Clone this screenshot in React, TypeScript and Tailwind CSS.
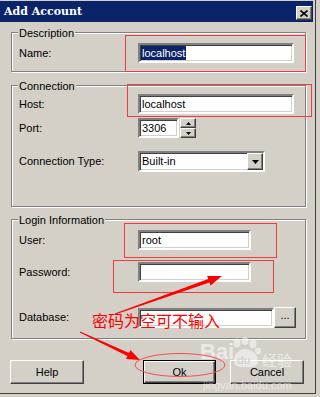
import React from 'react';

// Win2k style chrome pieces
const Sunken: React.FC<{ className?: string; children?: React.ReactNode }> = ({ className, children }) => (
  <div
    className={`h-[20px] bg-white border-2 border-t-[#808080] border-l-[#808080] border-b-white border-r-white shadow-[inset_1px_1px_0_#404040,inset_-1px_-1px_0_#d4d0c8] flex items-center pl-[1px] ${className ?? ''}`}
  >
    {children}
  </div>
);

const Raised: React.FC<{ className?: string; children?: React.ReactNode }> = ({ className, children }) => (
  <div
    className={`bg-[#d4d0c8] border border-t-white border-l-white border-b-[#404040] border-r-[#404040] shadow-[inset_-1px_-1px_0_#808080] flex items-center justify-center ${className ?? ''}`}
  >
    {children}
  </div>
);

const Group: React.FC<{ title: string; className?: string; children?: React.ReactNode }> = ({ title, className, children }) => (
  <div
    className={`relative w-[295px] border border-[#808080] shadow-[inset_1px_1px_0_#fff,1px_1px_0_#fff] pl-[7px] ${className ?? ''}`}
  >
    <span className="absolute left-[6px] -top-[6px] px-[1px] bg-[#d4d0c8] leading-[13px]">{title}</span>
    {children}
  </div>
);

const Row: React.FC<{ label: string; className?: string; children?: React.ReactNode }> = ({ label, className, children }) => (
  <div className={`flex items-center ${className ?? ''}`}>
    <span className="w-[119px] shrink-0">{label}</span>
    {children}
  </div>
);

const Tri: React.FC<{ down?: boolean; w: number; h: number }> = ({ down, w, h }) => (
  <svg width={w} height={h} viewBox={`0 0 ${w} ${h}`}>
    <polygon points={down ? `0,0 ${w},0 ${w / 2},${h}` : `0,${h} ${w},${h} ${w / 2},0`} fill="#000" />
  </svg>
);

export default function App() {
  return (
    <div className="relative w-[320px] h-[397px] overflow-hidden bg-[#d4d0c8] text-[11px] text-black font-['Liberation_Sans',Arial,sans-serif]">
      <div className="w-[316px] h-[394px] border-r border-b border-[#404040] pt-[1px]">
        {/* Title bar */}
        <div className="mr-[2px] h-[21px] bg-[#0a246a] flex items-center justify-between pl-[4px] pr-[1px]">
          <span className="text-white font-bold text-[11px] leading-none font-['DejaVu_Serif','Liberation_Serif',serif]">
            Add Account
          </span>
          <Raised className="w-[16px] h-[14px] mt-[3px]">
            <svg width="8" height="7" viewBox="0 0 8 7">
              <path d="M0.5 0.5 L7.5 6.5 M7.5 0.5 L0.5 6.5" stroke="#000" strokeWidth="1.6" />
            </svg>
          </Raised>
        </div>

        <div className="px-[11px]">
          <Group title="Description" className="mt-[10px] pt-[10px] pb-[8px]">
            <Row label="Name:">
              <Sunken className="w-[156px]">
                <span className="bg-[#0a246a] text-white leading-[14px] px-[1px]">localhost</span>
              </Sunken>
            </Row>
          </Group>

          <Group title="Connection" className="mt-[13px] pt-[8px] pb-[34px]">
            <Row label="Host:">
              <Sunken className="w-[156px] pl-[2px]">localhost</Sunken>
            </Row>
            <Row label="Port:" className="mt-[4px]">
              <Sunken className="w-[41px] pl-[2px]">3306</Sunken>
              <div className="flex flex-col ml-[1px]">
                <Raised className="w-[16px] h-[10px]">
                  <Tri w={5} h={3} />
                </Raised>
                <Raised className="w-[16px] h-[10px]">
                  <Tri down w={5} h={3} />
                </Raised>
              </div>
            </Row>
            <Row label="Connection Type:" className="mt-[13px]">
              <Sunken className="w-[127px] h-[21px] pl-[2px] pr-0 justify-between">
                <span>Built-in</span>
                <Raised className="w-[16px] h-[17px]">
                  <Tri down w={7} h={4} />
                </Raised>
              </Sunken>
            </Row>
          </Group>

          <Group title="Login Information" className="mt-[12px] pt-[10px] pb-[10px]">
            <Row label="User:">
              <Sunken className="w-[113px] pl-[2px]">root</Sunken>
            </Row>
            <Row label="Password:" className="mt-[12px]">
              <Sunken className="w-[113px]" />
            </Row>
            <Row label="Database:" className="mt-[25px]">
              <Sunken className="w-[136px]" />
              <Raised className="w-[22px] h-[21px] pb-[4px]">...</Raised>
            </Row>
          </Group>

          <div className="flex mt-[21px] -ml-[1px]">
            <Raised className="w-[75px] h-[24px]">Help</Raised>
            <div className="ml-[59px] w-[74px] h-[24px] border border-black">
              <Raised className="w-full h-full">Ok</Raised>
            </div>
            <Raised className="ml-[14px] w-[75px] h-[24px]">Cancel</Raised>
          </div>
        </div>
      </div>

      {/* Baidu watermark */}
      <div className="absolute left-[200px] top-[341px] text-white/55 font-bold text-[22px] leading-none pointer-events-none">
        Bai
      </div>
      <svg className="absolute left-[228px] top-[337px] pointer-events-none" width="36" height="32" viewBox="0 0 36 32">
        <g fill="rgba(255,255,255,0.5)">
          <ellipse cx="9" cy="6" rx="3.5" ry="4.5" />
          <ellipse cx="17" cy="4" rx="3.5" ry="4" />
          <ellipse cx="25" cy="7" rx="3.5" ry="4.5" />
          <ellipse cx="30" cy="14" rx="3" ry="3.5" />
          <path d="M6 24 C6 16 12 12 17 12 C24 12 30 18 30 24 C30 30 24 31 17 30 C11 31 6 29 6 24 Z" />
        </g>
        <text x="9" y="27" fontSize="11" fontWeight="bold" fill="rgba(212,208,200,0.9)" fontFamily="Liberation Sans, Arial, sans-serif">du</text>
      </svg>
      <div className="absolute left-[262px] top-[352px] text-white/55 text-[15px] leading-none font-['Noto_Sans_CJK_SC',sans-serif] pointer-events-none">
        经验
      </div>
      <div className="absolute left-[203px] top-[380px] text-white/50 text-[11px] leading-none pointer-events-none">
        jingyan.baidu.com
      </div>

      {/* Red annotations */}
      <svg className="absolute inset-0 pointer-events-none" width="320" height="397" viewBox="0 0 320 397">
        <g fill="none" stroke="#f03c3c" strokeWidth="1">
          <rect x="125.5" y="35.5" width="180" height="36" />
          <rect x="127.5" y="84.5" width="184" height="32" />
          <rect x="124.5" y="223.5" width="152" height="34" />
          <rect x="113.5" y="260.5" width="160" height="32" />
          <ellipse cx="180" cy="365" rx="45" ry="11.5" stroke="#f05050" />
        </g>
        <g fill="#ff0000">
          <polygon points="114.8,313.5 208.2,279.0 207.1,276.0 222,276 210.5,285.4 209.4,282.4 115.2,314.5" />
          <polygon points="80.2,331.5 129.0,352.9 130.3,350.0 140,360 126.1,359.0 127.4,356.1 79.8,332.5" />
        </g>
      </svg>
      <div className="absolute left-[92px] top-[312px] text-[#ff0000] text-[16px] leading-[16px] font-['Noto_Sans_CJK_SC',sans-serif] pointer-events-none">
        密码为空可不输入
      </div>
    </div>
  );
}
